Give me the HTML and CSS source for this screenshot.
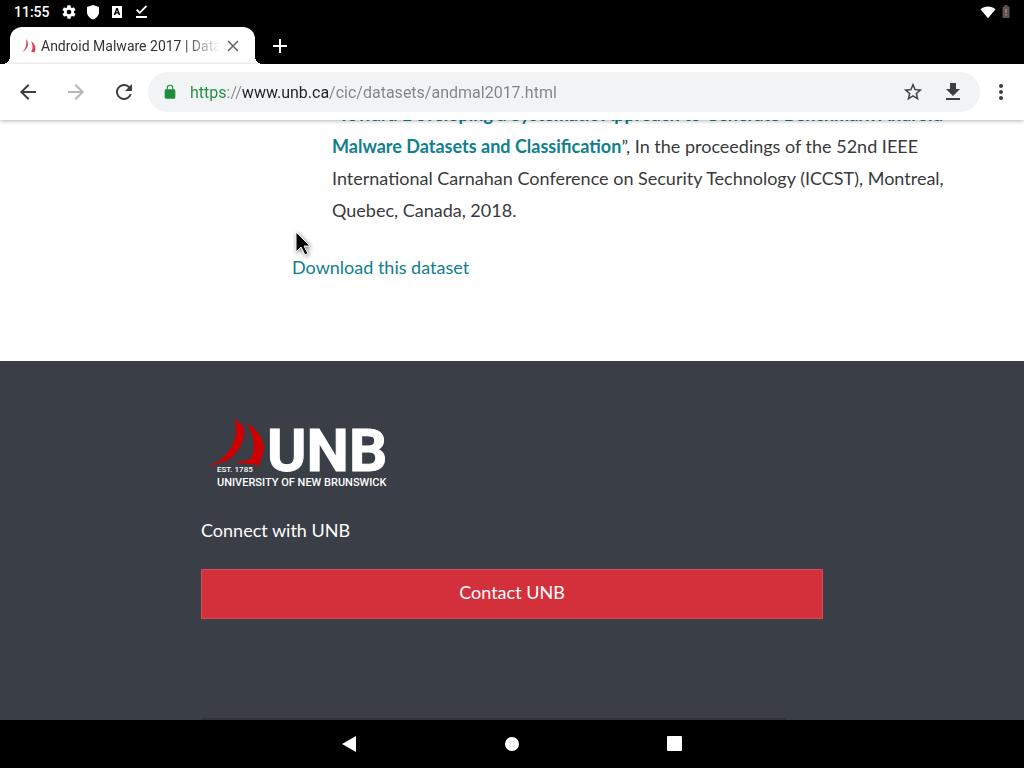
FILE: index.html
```html
<!DOCTYPE html>
<html lang="en">
<head>
	<meta charset="UTF-8">
	<title>Android Malware 2017 | Datasets</title>
	<link rel="stylesheet" href="styles.css">
</head>
<body>
	<div class="status">
		<span class="clock">11:55</span>
		<svg width="16" height="16" viewBox="0 0 24 24"><path d="M19.4 13a7.500 7.500 0 0 0 0-2l2.100-1.600a.5.5 0 0 0 .1-.6l-2-3.500a.5.5 0 0 0-.6-.2l-2.500 1a7.300 7.300 0 0 0-1.700-1L14.500 2.400A.5.5 0 0 0 14 2h-4a.5.5 0 0 0-.5.400L9.100 5.100c-.6.200-1.200.6-1.700 1l-2.500-1a.5.5 0 0 0-.6.200l-2 3.500a.5.5 0 0 0 .1.600L4.600 11a7.500 7.500 0 0 0 0 2l-2.100 1.600a.5.5 0 0 0-.1.600l2 3.500c.1.200.4.300.6.200l2.500-1c.5.400 1.100.7 1.700 1l.4 2.700c0 .2.200.4.4.400h4c.3 0 .5-.2.5-.4l.4-2.700c.6-.2 1.200-.6 1.700-1l2.500 1c.2.100.5 0 .6-.2l2-3.500a.5.5 0 0 0-.1-.6zM12 15.500a3.500 3.500 0 1 1 0-7 3.500 3.500 0 0 1 0 7z"/></svg>
		<svg width="16" height="16" viewBox="0 0 16 16"><path d="M8 1L2 3v5c0 3.500 2.500 6.200 6 7.500 3.500-1.300 6-4 6-7.500V3z"/></svg>
		<svg width="16" height="16" viewBox="0 0 16 16"><path d="M3 2h10v12H3z"/><path class="cut" d="M7.300 4h1.400l2.600 7H9.700l-.5-1.400H6.800L6.300 11H4.700zM8 6l-.8 2.300h1.600z"/></svg>
		<svg width="16" height="16" viewBox="0 0 16 16"><path d="M3 6.200l1.300-1.300 2.500 2.500L12.900 1.300l1.300 1.300L6.800 10zM3 12h11v2H3z"/></svg>
		<span class="space"></span>
		<svg width="16" height="16" viewBox="0 0 16 16"><path d="M.5 5.200C4.800 1.500 11.200 1.500 15.500 5.200L8 14.300z"/></svg>
		<svg class="battery" width="8" height="14" viewBox="0 0 8 14"><path d="M2.500 0h3v1.500H7.500V13H.5V1.500h2z"/><path class="alert" d="M3.300 4h1.400v4H3.300zM3.300 9h1.400v1.500H3.300z"/></svg>
	</div>

	<div class="tabs">
		<div class="tab">
			<svg width="14" height="14" viewBox="0 0 14 14"><path class="sail" d="M4 0c3.200 3.500 3.300 9.500-4 13.200C3.800 10 5 5.500 4 0z"/><path class="sail" d="M9 2c4.800 3.500 5.300 7.500 3.600 11.500L9 12.800C11 10 11 6 9 2z"/></svg>
			<span class="tabtitle">Android Malware 2017 | Datasets</span>
			<button class="close" aria-label="Close tab"><svg width="12" height="12" viewBox="0 0 12 12"><path d="M1 1l10 10M11 1L1 11"/></svg></button>
		</div>
		<button class="newtab" aria-label="New tab"><svg width="14" height="14" viewBox="0 0 14 14"><path d="M7 0v14M0 7h14"/></svg></button>
	</div>

	<div class="toolbar">
		<button aria-label="Back"><svg width="24" height="24" viewBox="0 0 24 24"><path d="M20 11H7.800l5.600-5.600L12 4l-8 8 8 8 1.400-1.400L7.800 13H20z"/></svg></button>
		<button class="off" aria-label="Forward" disabled><svg width="24" height="24" viewBox="0 0 24 24"><path d="M12 4l-1.400 1.400 5.600 5.600H4v2h12.200l-5.600 5.600L12 20l8-8z"/></svg></button>
		<button aria-label="Reload"><svg width="24" height="24" viewBox="0 0 24 24"><path d="M17.650 6.350A8 8 0 1 0 19.730 14h-2.080A6 6 0 1 1 12 6c1.660 0 3.140.690 4.220 1.780L13 11h7V4z"/></svg></button>
		<div class="omnibox">
			<svg class="lock" width="16" height="16" viewBox="0 0 24 24"><path d="M18 8h-1V6A5 5 0 0 0 7 6v2H6a2 2 0 0 0-2 2v10c0 1.100.900 2 2 2h12a2 2 0 0 0 2-2V10a2 2 0 0 0-2-2zM8.700 8V6a3.300 3.300 0 0 1 6.600 0v2z"/></svg>
			<input class="url" type="text" aria-label="Address" value="https://www.unb.ca/cic/datasets/andmal2017.html">
			<button aria-label="Bookmark"><svg width="22" height="22" viewBox="0 0 24 24"><path d="M22 9.240l-7.190-.620L12 2 9.190 8.630 2 9.240l5.460 4.730L5.820 21 12 17.270 18.180 21l-1.630-7.030zM12 15.400l-3.760 2.270 1-4.280-3.320-2.880 4.380-.380L12 6.100l1.710 4.040 4.380.380-3.320 2.880 1 4.280z"/></svg></button>
			<button aria-label="Download page"><svg width="24" height="24" viewBox="0 0 24 24"><path d="M19 9h-4V3H9v6H5l7 7zM5 18v2h14v-2z"/></svg></button>
		</div>
		<button class="more" aria-label="Menu"><svg width="24" height="24" viewBox="0 0 24 24"><circle cx="12" cy="6" r="2"/><circle cx="12" cy="12" r="2"/><circle cx="12" cy="18" r="2"/></svg></button>
	</div>

	<div class="page">
		<div class="content">
			<p class="cite">“<a href="#"><b>Toward Developing a Systematic Approach to Generate Benchmark Android<br>Malware Datasets and Classification</b></a>”, In the proceedings of the 52nd IEEE<br>International Carnahan Conference on Security Technology (ICCST), Montreal,<br>Quebec, Canada, 2018.</p>
			<p><a href="#">Download this dataset</a></p>
		</div>
		<div class="footer">
			<div class="inner">
				<svg class="logo" width="190" height="72" viewBox="0 0 190 72" role="img" aria-label="University of New Brunswick">
					<path class="red" d="M33 1C36 5 40 6 42 9C45 17 42 26 37 33C33 39 30 42 25 44C18 45 13 49 8 50C14 45 21 43 27 35C34 26 37 15 33 1z"/>
					<path class="red" d="M45 6C53 11 60 17 62 25C65 34 60 41 58 49C53 47 44 46 35 46C40 43 45 44 49 42C55 34 54 19 45 6z"/>
					<text class="unb" x="66" y="54">UNB</text>
					<text class="est" x="16" y="55">EST. 1785</text>
					<text class="uni" x="16" y="69">UNIVERSITY OF NEW BRUNSWICK</text>
				</svg>
				<h2>Connect with UNB</h2>
				<a class="contact" href="#">Contact UNB</a>
			</div>
			<hr>
		</div>
		<svg class="cursor" width="20" height="28" viewBox="0 0 20 28"><path d="M2 1v20l5-5 4 8 3-1.500-4-7.500h6z"/></svg>
	</div>

	<div class="nav">
		<button aria-label="Back"><svg width="16" height="16" viewBox="0 0 16 16"><path d="M14 0v16L0 8z"/></svg></button>
		<button aria-label="Home"><svg width="16" height="16" viewBox="0 0 16 16"><circle cx="8" cy="8" r="7"/></svg></button>
		<button aria-label="Recent apps"><svg width="16" height="16" viewBox="0 0 16 16"><rect width="15" height="15" x="1" y="0" rx="1"/></svg></button>
	</div>
</body>
</html>
```
FILE: styles.css
```css
*{
	margin: 0;
	padding: 0;
	box-sizing: border-box;
}
body{
	height: 100vh;
	display: flex;
	flex-direction: column;
	overflow: hidden;
	background-color: black;
	font-family: Roboto, Arial, sans-serif;
}
svg{
	display: block;
	flex: none;
}
button{
	display: flex;
	align-items: center;
	justify-content: center;
	border: none;
	background: none;
}
.status{
	height: 24px;
	display: flex;
	align-items: center;
	gap: 8px;
	padding: 0 14px;
	color: white;
	fill: white;
}
.clock{
	font-size: 14px;
	font-weight: 500;
	margin-right: 3px;
}
.cut{
	fill: black;
}
.space{
	flex: 1;
}
.status .battery{
	margin-left: -2px;
	fill: #5c5250;
}
.alert{
	fill: #c08080;
}
.tabs{
	height: 40px;
	display: flex;
	padding: 3px 10px 0;
}
.tab{
	position: relative;
	width: 245px;
	display: flex;
	align-items: center;
	padding: 0 16px 0 12px;
	border-radius: 12px 12px 0 0;
	background-color: white;
}
.tab:before, .tab:after{
	content: "";
	position: absolute;
	bottom: 0;
	width: 8px;
	height: 8px;
}
.tab:before{
	left: -8px;
	background: radial-gradient(circle at 0 0, transparent 8px, white 8px);
}
.tab:after{
	right: -8px;
	background: radial-gradient(circle at 100% 0, transparent 8px, white 8px);
}
.sail{
	fill: #d4455c;
}
.tabtitle{
	flex: 1;
	margin-left: 5px;
	margin-right: 7px;
	overflow: hidden;
	white-space: nowrap;
	font-size: 14px;
	color: #333;
	-webkit-mask-image: linear-gradient(to left, transparent, black 36px);
	mask-image: linear-gradient(to left, transparent, black 36px);
}
.close{
	stroke: #666;
	stroke-width: 1.500;
}
.newtab{
	width: 50px;
	stroke: white;
	stroke-width: 2;
}
.toolbar{
	position: relative;
	z-index: 1;
	height: 56px;
	flex: none;
	display: flex;
	align-items: center;
	padding: 0 13px 0 4px;
	background-color: white;
	box-shadow: 0 1px 4px rgba(0,0,0,0.3);
	fill: #3c4043;
}
.toolbar button{
	width: 48px;
	height: 40px;
}
.toolbar .off{
	fill: #b5b6b8;
}
.omnibox{
	flex: 1;
	height: 40px;
	display: flex;
	align-items: center;
	padding-left: 14px;
	border-radius: 20px;
	background-color: #f1f3f4;
}
.omnibox button{
	width: 40px;
}
.omnibox button:last-child{
	margin-right: 7px;
}
.lock{
	fill: #1e8e3e;
}
.url{
	flex: 1;
	height: 24px;
	margin-left: 12px;
	border: none;
	outline: none;
	font-family: Roboto, Arial, sans-serif;
	font-size: 16px;
	/* scheme, separator, host, path */
	background: linear-gradient(to right, #1e8e3e 38px, #8a8d90 38px, #8a8d90 52px, #202124 52px, #202124 138px, #808488 138px);
	-webkit-background-clip: text;
	background-clip: text;
	color: transparent;
}
.toolbar .more{
	width: 20px;
	margin-left: 11px;
}
.page{
	position: relative;
	flex: 1;
	min-height: 0;
	display: flex;
	flex-direction: column;
	justify-content: flex-end;
	overflow: hidden;
	background-color: white;
	font-family: Lato, "Open Sans", sans-serif;
	font-size: 18px;
	line-height: 32px;
	color: #3a3a3c;
}
.page a{
	color: #10808c;
	text-decoration: none;
}
.content{
	padding: 0 40px 78px 292px;
}
.cite{
	margin-bottom: 25px;
	padding-left: 40px;
	white-space: nowrap;
}
.footer{
	padding: 56px 201px 0;
	background-color: #3a3e46;
	color: white;
}
.inner{
	padding-bottom: 99px;
}
.footer hr{
	width: 94%;
	border: none;
	border-top: 2px solid #333439;
}
.logo{
	fill: white;
	font-family: Roboto, Arial, sans-serif;
}
.red{
	fill: #cc0000;
}
.unb{
	font-size: 60px;
	font-weight: 700;
	stroke: white;
	stroke-width: 1;
}
.est{
	font-size: 8px;
	font-weight: 500;
}
.uni{
	font-size: 11px;
	font-weight: 500;
}
.footer h2{
	margin: 25px 0 23px;
	font-size: 18px;
	font-weight: 400;
}
.footer .contact{
	display: block;
	padding: 6px 8px 10px;
	border: 1px solid #d94a55;
	background-color: #d4303b;
	color: white;
	text-align: center;
}
.cursor{
	position: absolute;
	left: 294px;
	top: 111px;
	stroke: white;
	stroke-width: 1;
	filter: drop-shadow(1px 1px 2px rgba(0,0,0,0.5));
}
.nav{
	height: 48px;
	flex: none;
	display: flex;
	align-items: center;
	justify-content: center;
	gap: 146px;
	fill: white;
}
```
